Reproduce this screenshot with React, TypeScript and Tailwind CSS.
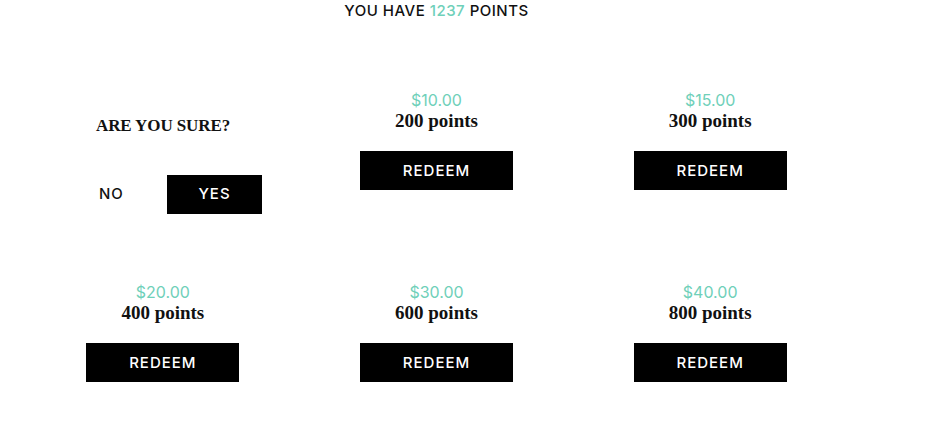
import React from "react";

const sans = "font-['Inter','Liberation_Sans',Arial,sans-serif]";
const serif = "font-['Liberation_Serif','Times_New_Roman',serif]";

const rewards = [
  { price: "$10.00", points: 200 },
  { price: "$15.00", points: 300 },
  { price: "$20.00", points: 400 },
  { price: "$30.00", points: 600 },
  { price: "$40.00", points: 800 },
];

function RewardCard({ price, points }: { price: string; points: number }) {
  return (
    <div className="flex flex-col items-center pt-[1px]">
      <p className={`${sans} text-[16px] leading-[20px] text-[#6fd0b9]`}>{price}</p>
      <p className={`${serif} text-[19px] leading-[22px] font-bold text-[#111]`}>
        {points} points
      </p>
      <button
        className={`${sans} mt-[19px] h-[39px] w-[153px] bg-black text-white text-[15px] font-medium tracking-[1px] pt-[1px]`}
      >
        REDEEM
      </button>
    </div>
  );
}

function ConfirmCard() {
  return (
    <div className="pl-[70px] pt-[27px]">
      <h4 className={`${serif} text-[17px] leading-[20px] font-bold tracking-[-0.1px] text-[#111]`}>
        ARE YOU SURE?
      </h4>
      <div className="mt-[39px] flex items-center">
        <button
          className={`${sans} w-[71px] text-left pl-[3px] text-[15px] font-medium tracking-[1px] text-[#111]`}
        >
          NO
        </button>
        <button
          className={`${sans} h-[39px] w-[95px] bg-black text-white text-[15px] font-medium tracking-[1px]`}
        >
          YES
        </button>
      </div>
    </div>
  );
}

export default function App() {
  return (
    <div className="w-[940px] h-[436px] bg-white overflow-hidden">
      <div className="w-[821px] ml-[26px]">
        <p
          className={`${sans} pt-[1px] text-center text-[15px] leading-[20px] font-medium tracking-[0.5px] text-[#111]`}
        >
          YOU HAVE <span className="text-[#6fd0b9]">1237</span> POINTS
        </p>
        <div className="mt-[68px] grid grid-cols-3 grid-rows-[101px_101px] gap-y-[91px]">
          <ConfirmCard />
          {rewards.map((r, index) => (
            <RewardCard key={index} price={r.price} points={r.points} />
          ))}
        </div>
      </div>
    </div>
  );
}
